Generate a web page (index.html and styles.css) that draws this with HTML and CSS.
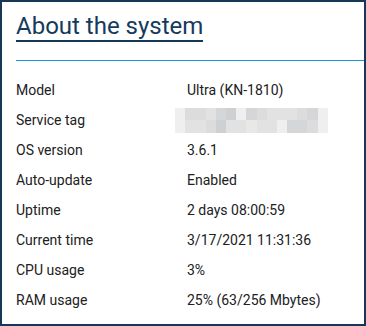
FILE: index.html
```html
<!DOCTYPE html>
<html>
<head>
<meta charset="utf-8">
<link rel="stylesheet" href="styles.css">
</head>
<body>
<div class="panel">
  <h1 class="title">About the system</h1>
  <div class="rule"></div>
  <dl class="info">
    <div class="row"><dt>Model</dt><dd>Ultra (KN-1810)</dd></div>
    <div class="row"><dt>Service tag</dt><dd>
      <div class="blur">
        <span class="c1"></span><span class="c2"></span><span class="c2"></span><span class="c3"></span><span class="c4"></span><span class="c5"></span><span class="c1"></span><span class="c4"></span><span class="c2"></span><span class="c3"></span><span class="c3"></span><span class="c3"></span><span class="c2"></span><span class="c4"></span><span class="c1"></span>
        <span class="c1"></span><span class="c3"></span><span class="c3"></span><span class="c2"></span><span class="c5"></span><span class="c3"></span><span class="c3"></span><span class="c6"></span><span class="c3"></span><span class="c3"></span><span class="c1"></span><span class="c4"></span><span class="c4"></span><span class="c2"></span><span class="c1"></span>
      </div>
    </dd></div>
    <div class="row"><dt>OS version</dt><dd>3.6.1</dd></div>
    <div class="row"><dt>Auto-update</dt><dd>Enabled</dd></div>
    <div class="row"><dt>Uptime</dt><dd>2 days 08:00:59</dd></div>
    <div class="row"><dt>Current time</dt><dd>3/17/2021 11:31:36</dd></div>
    <div class="row"><dt>CPU usage</dt><dd>3%</dd></div>
    <div class="row"><dt>RAM usage</dt><dd>25% (63/256 Mbytes)</dd></div>
  </dl>
</div>
</body>
</html>
```
FILE: styles.css
```css
html, body {
  margin: 0;
  padding: 0;
  background: #ffffff;
}
body {
  font-family: Roboto, "Liberation Sans", sans-serif;
  color: #212121;
}
.panel {
  box-sizing: border-box;
  width: 366px;
  height: 326px;
  border: 2px solid #143855;
  padding: 10px 0 9px 14px;
  display: flex;
  flex-direction: column;
  align-items: flex-start;
}
.title {
  margin: 0;
  font-size: 24px;
  font-weight: 400;
  line-height: 28px;
  color: #163a5c;
  border-bottom: 2px solid #143855;
}
.rule {
  align-self: stretch;
  height: 1px;
  background: #1a94d2;
  margin-top: 18px;
}
.info {
  margin: 14px 0 0 0;
  align-self: stretch;
}
.row {
  display: flex;
  align-items: center;
  height: 30px;
  font-size: 14px;
}
.row dt {
  width: 171px;
  flex: none;
}
.row dd {
  margin: 0;
}
.blur {
  display: grid;
  grid-template-columns: repeat(15, 10.2px);
  grid-template-rows: 12px 13px;
  margin-left: -12px;
}
.blur span { display: block; }
.c1 { background: #efeff0; }
.c2 { background: #dcdcdc; }
.c3 { background: #e2e2e2; }
.c4 { background: #d5d6d7; }
.c5 { background: #cfd0d1; }
.c6 { background: #e8e8e6; }
```
